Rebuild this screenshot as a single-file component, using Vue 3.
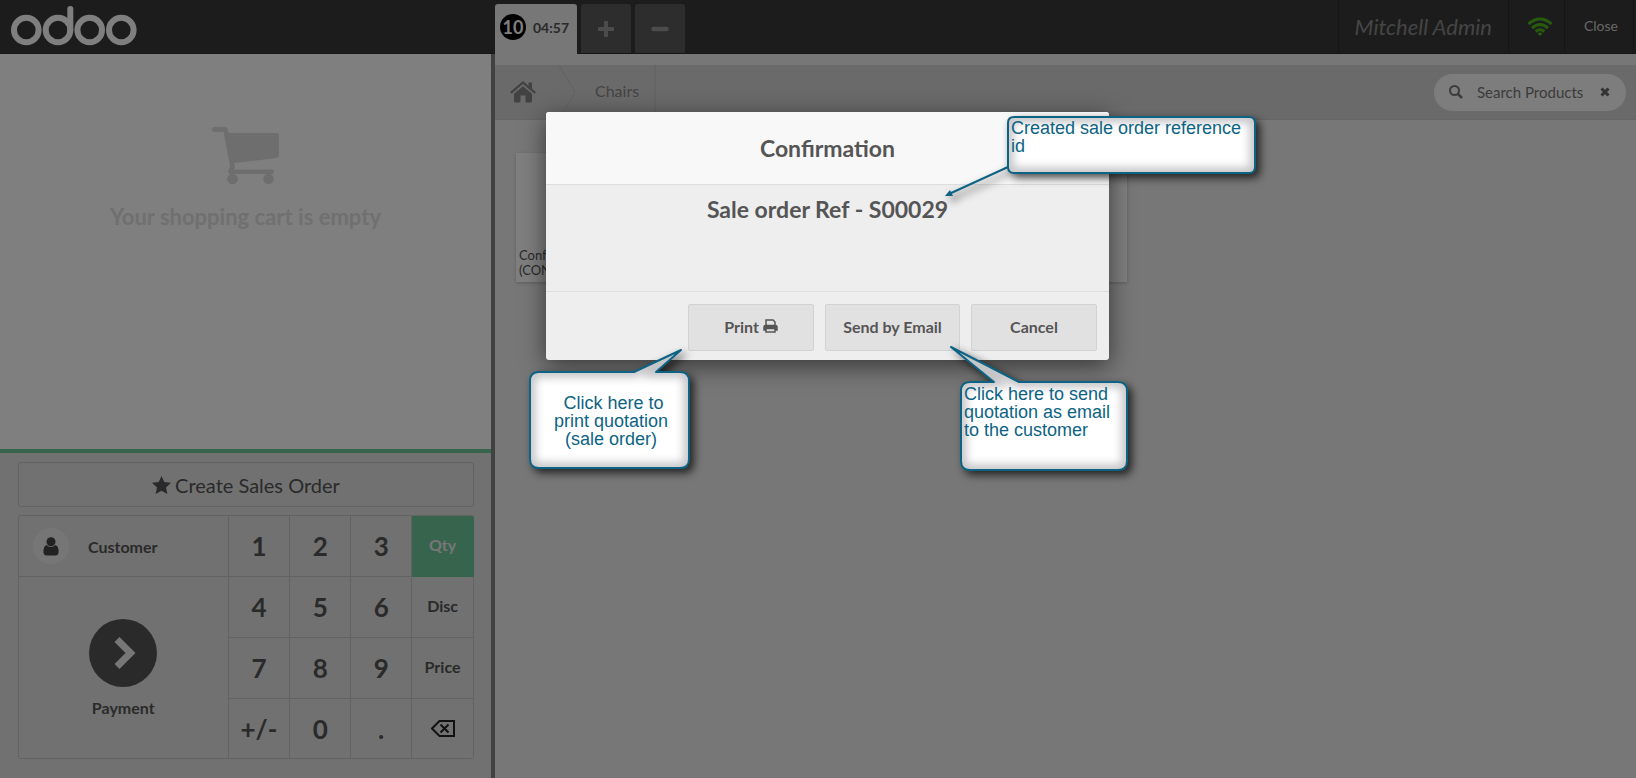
<script setup>
import { ref } from 'vue'

const search = ref('')
const mode = ref('Qty')
const cards = ['Conference Chair (CONFIG)', '', '', '']
const keys = ['1', '2', '3', 'Qty', '4', '5', '6', 'Disc', '7', '8', '9', 'Price', '+/-', '0', '.', 'back']
const modes = ['Qty', 'Disc', 'Price']

function press(key) {
  if (modes.includes(key)) mode.value = key
}

const bubbles = [
  {
    id: 'print',
    path: 'M-9 260 H88 L135 238 L110 260 H134 Q143 260 143 269 V347 Q143 356 134 356 H-7 Q-16 356 -16 347 V269 Q-16 260 -7 260 Z'
  },
  {
    id: 'email',
    path: 'M424 270 H448 L405 235 L473 270 H572 Q581 270 581 279 V349 Q581 358 572 358 H424 Q415 358 415 349 V279 Q415 270 424 270 Z'
  },
  {
    id: 'reference',
    path: 'M468 5 H703 Q709 5 709 11 V55 Q709 61 703 61 H468 Q462 61 462 55 V11 Q462 5 468 5 Z'
  }
]
</script>

<template>
  <div class="pos">
    <header class="topbar">
      <div class="brand">
        <svg width="128" height="44" viewBox="0 0 128 44" role="img" aria-label="odoo">
          <g fill="none" stroke="#fff" stroke-width="6" stroke-linecap="round">
            <circle cx="16.300" cy="26" r="12.3" />
            <circle cx="48" cy="26" r="12.3" />
            <circle cx="79.700" cy="26" r="12.3" />
            <circle cx="111.300" cy="26" r="12.3" />
            <path d="M60.300 5 V26" />
          </g>
        </svg>
      </div>
      <nav class="tabs">
        <button class="tab active" type="button"><span class="seq">10</span><span class="time">04:57</span></button>
        <button class="tab" type="button" aria-label="New order">
          <svg width="16" height="16" viewBox="0 0 16 16"><path d="M8 1.5V14.5M1.5 8H14.5" stroke="#999" stroke-width="4" stroke-linecap="round" /></svg>
        </button>
        <button class="tab" type="button" aria-label="Remove order">
          <svg width="18" height="16" viewBox="0 0 18 16"><path d="M2.5 8H15.5" stroke="#999" stroke-width="4.5" stroke-linecap="round" /></svg>
        </button>
      </nav>
      <div class="status">
        <span class="user">Mitchell Admin</span>
        <span class="wifi">
          <svg width="26" height="20" viewBox="0 0 26 20" fill="none" stroke="#4eb81e" stroke-width="3">
            <path d="M1.5 7 Q13 -3 24.5 7" /><path d="M5 11 Q13 4 21 11" /><path d="M8.700 14.500 Q13 11 17.300 14.500" />
            <path d="M10.500 16.500 L13 19 L15.500 16.500 Q13 14.500 10.500 16.500Z" fill="#4eb81e" stroke="none" />
          </svg>
        </span>
        <button class="close" type="button">Close</button>
      </div>
    </header>

    <div class="content">
      <section class="left">
        <div class="order">
          <svg width="68" height="58" viewBox="0 0 68 58" fill="#dcdcdc">
            <path d="M2.500 0H13Q15.500 0 16 3L16.500 6H65Q67 6 67 8V28Q67 30.500 64.500 31L22 36L23 40.500Q23 42 22 42.500H59.500Q62 42.500 62 45Q62 47 59.500 47H18.500Q16 47 16 44.500L18 39L11.500 5H2.500Q0 5 0 2.500Q0 0 2.500 0Z" />
            <circle cx="20.500" cy="52" r="5.300" /><circle cx="56.500" cy="52" r="5.300" />
          </svg>
          <h1>Your shopping cart is empty</h1>
        </div>
        <div class="actions">
          <button class="create" type="button">
            <svg width="19" height="18" viewBox="0 0 19 18"><path d="M9.500 0L12.300 6L19 6.800L14 11.400L15.400 18L9.500 14.700L3.600 18L5 11.400L0 6.800L6.700 6Z" fill="#555" /></svg>
            Create Sales Order
          </button>
          <div class="pad">
            <button class="customer" type="button">
              <span class="avatar"><svg width="16" height="19" viewBox="0 0 16 19" fill="#444"><circle cx="8" cy="4.700" r="4.500" /><path d="M3.500 8Q8 12 12.500 8Q16 9 15.500 16Q15 18.500 12.500 18.500H3.500Q1 18.500 .5 16Q0 9 3.500 8Z" /></svg></span>
              Customer
            </button>
            <button class="payment" type="button">
              <span class="go"><svg width="22" height="34" viewBox="0 0 22 34"><path d="M3 3.500L16.500 17L3 30.500" fill="none" stroke="#eee" stroke-width="7" /></svg></span>
              Payment
            </button>
            <button
              v-for="key in keys"
              :key="key"
              type="button"
              :class="['key', { word: modes.includes(key), selected: key === mode }]"
              @click="press(key)"
            >
              <svg v-if="key === 'back'" width="24" height="17" viewBox="0 0 24 17" fill="none" stroke="#222" stroke-width="2" role="img" aria-label="Backspace">
                <path d="M8.500 1H23V16H8.500L1 8.500Z" /><path d="M9.500 4.500L17.500 12.500M17.500 4.500L9.500 12.500" />
              </svg>
              <template v-else>{{ key }}</template>
            </button>
          </div>
        </div>
      </section>

      <main class="right">
        <div class="crumbs">
          <a class="home" href="#" aria-label="Home">
            <svg width="26" height="22" viewBox="0 0 26 22" fill="#858585">
              <path d="M13 0L18.500 4.700V1.500H22V7.700L26 11L24.500 12.700L13 3L1.500 12.700L0 11Z" /><path d="M13 5.200L22 12.700V20Q22 21.500 20.500 21.500H15.500V14.500H10.500V21.500H5.500Q4 21.500 4 20V12.700Z" />
            </svg>
          </a>
          <svg class="chevron" width="20" height="55" viewBox="0 0 20 55"><path d="M1 0L17 27L1 55" fill="none" stroke="#cacaca" stroke-width="1.500" /></svg>
          <a class="crumb" href="#">Chairs</a>
          <label class="search">
            <svg width="14" height="14" viewBox="0 0 14 14" fill="none" stroke="#777" stroke-width="2"><circle cx="5.500" cy="5.500" r="4.500" /><path d="M9 9L13 13" stroke-width="2.500" /></svg>
            <input v-model="search" type="text" placeholder="Search Products" aria-label="Search Products" />
            <button type="button" aria-label="Clear search" @click="search = ''">
              <svg width="10" height="10" viewBox="0 0 10 10"><path d="M1.500 1.500L8.500 8.500M8.500 1.500L1.500 8.500" stroke="#666" stroke-width="3" /></svg>
            </button>
          </label>
        </div>
        <div class="products">
          <article v-for="(name, i) in cards" :key="i" class="card">{{ name }}</article>
        </div>
      </main>
    </div>

    <div class="backdrop">
      <div class="stage">
        <div class="dialog" role="dialog" aria-labelledby="dialog-title">
          <h2 id="dialog-title">Confirmation</h2>
          <p class="message">Sale order Ref - S00029</p>
          <footer>
            <button type="button">
              Print
              <svg width="15" height="14" viewBox="0 0 15 14" fill="none" stroke="#555" stroke-width="1.500"><path d="M3 6V1H10L12 3V6" /><path d="M1 11V8Q1 6.500 2.500 6.500H12.500Q14 6.500 14 8V11H12V9H3V11Z" fill="#555" /><path d="M3 9.500H12V13H3Z" fill="#e2e1e2" /></svg>
            </button>
            <button class="wide" type="button">Send by Email</button>
            <button type="button">Cancel</button>
          </footer>
        </div>

        <svg class="bubbles" width="562" height="248" viewBox="0 0 562 248" aria-hidden="true">
          <defs>
            <filter id="soft" x="-20%" y="-20%" width="140%" height="140%"><feGaussianBlur stdDeviation="4" /></filter>
            <clipPath v-for="b in bubbles" :id="'clip-' + b.id" :key="b.id"><path :d="b.path" /></clipPath>
          </defs>
          <g class="lift"><path d="M462 55L403 82" stroke="#0d6384" stroke-width="2" /><path d="M399 84L404 78L407 84Z" fill="#0d6384" /></g>
          <g v-for="b in bubbles" :key="b.id" class="lift">
            <path :d="b.path" fill="#fff" />
            <g :clip-path="`url(#clip-${b.id})`">
              <path :d="b.path" fill="none" stroke="#c4c4c8" stroke-width="11" filter="url(#soft)" />
            </g>
            <path :d="b.path" fill="none" stroke="#0d6384" stroke-width="2" stroke-linejoin="round" />
          </g>
        </svg>
        <p class="note note-print">&nbsp;Click here to<br />print quotation<br />(sale order)</p>
        <p class="note note-email">Click here to send<br />quotation as email<br />to the customer</p>
        <p class="note note-reference">Created sale order reference<br />id</p>
      </div>
    </div>
  </div>
</template>

<style>
body {
  margin: 0;
  overflow: hidden;
}
</style>

<style scoped>
* {
  box-sizing: border-box;
}
.pos {
  position: relative;
  display: flex;
  flex-direction: column;
  height: 100vh;
  font-family: Lato, "Liberation Sans", sans-serif;
  font-size: 16px;
  color: #555;
}
button {
  font: inherit;
  color: inherit;
  background: none;
  border: 0;
  padding: 0;
  margin: 0;
}
svg {
  display: block;
  flex: none;
}
.topbar {
  display: flex;
  height: 54px;
  background: #393939;
  border-bottom: 1px solid #2c2c2c;
}
.brand {
  flex: 0 0 495px;
  padding: 4px 10px;
}
.tabs {
  display: flex;
  gap: 4px;
  padding-top: 4px;
}
.tab {
  display: flex;
  align-items: center;
  justify-content: center;
  width: 50px;
  height: 49px;
  background: #5a5a5a;
  border-radius: 3px 3px 0 0;
}
.tab.active {
  width: 82px;
  height: 50px;
  gap: 7px;
  padding: 0 3px 4px 0;
  background: #eee;
  font-weight: 700;
  font-size: 14px;
}
.seq {
  width: 26px;
  height: 26px;
  border-radius: 50%;
  background: #000;
  color: #fff;
  font-size: 18px;
  line-height: 26px;
}
.status {
  display: flex;
  margin-left: auto;
  align-items: stretch;
  padding-right: 2px;
}
.status > * {
  display: flex;
  align-items: center;
  border-left: 1px solid #2a2a2a;
}
.user {
  padding: 2px 16px;
  font-size: 22px;
  font-style: italic;
  color: #8a8a8a;
}
.wifi {
  padding: 0 11px 0 18px;
}
.close {
  padding: 0 15px 2px 19px;
  font-size: 14px;
  color: #ccc;
  border-right: 1px solid #2a2a2a;
}
.content {
  display: flex;
  flex: 1;
  min-height: 0;
}
.left {
  display: flex;
  flex-direction: column;
  flex: 0 0 495px;
  border-right: 4px solid #828282;
  background: #e2e2e2;
}
.order {
  flex: 1;
  display: flex;
  flex-direction: column;
  align-items: center;
  padding-top: 73px;
  background: #fff;
}
.order h1 {
  margin: 18px 0 0;
  font-size: 22px;
  line-height: 28px;
  color: #e0e0e0;
}
.actions {
  padding: 9px 17px 19px 18px;
  border-top: 4px solid #6ec89b;
}
.create {
  display: flex;
  align-items: center;
  justify-content: center;
  gap: 4px;
  width: 100%;
  height: 45px;
  margin-bottom: 8px;
  border: 1px solid #c4c4c4;
  border-radius: 3px;
  font-size: 20px;
}
.pad {
  display: grid;
  grid-template-columns: 210fr 62fr 61fr 61fr 62fr;
  grid-template-rows: 61px 61px 61px 60px;
  border: solid #c4c4c4;
  border-width: 1px 0 0 1px;
  border-radius: 3px;
  overflow: hidden;
}
.pad button {
  border: solid #c4c4c4;
  border-width: 0 1px 1px 0;
  font-weight: 700;
}
.pad .key {
  display: flex;
  align-items: center;
  justify-content: center;
  font-size: 26px;
}
.pad .word {
  padding-bottom: 3px;
  font-size: 16px;
}
.pad .selected {
  background: #6ec89b;
  border-color: #6ec89b;
  color: #eee;
}
.pad .customer {
  grid-area: 1 / 1;
  display: flex;
  align-items: center;
  gap: 19px;
  padding-left: 14px;
}
.avatar {
  display: flex;
  align-items: center;
  justify-content: center;
  width: 36px;
  height: 36px;
  border-radius: 50%;
  background: #ececec;
}
.payment {
  grid-area: 2 / 1 / 5 / 2;
  display: flex;
  flex-direction: column;
  align-items: center;
  justify-content: center;
  gap: 11px;
}
.go {
  display: flex;
  align-items: center;
  justify-content: center;
  width: 68px;
  height: 68px;
  padding-left: 4px;
  border-radius: 50%;
  background: #555;
}
.right {
  flex: 1;
  min-width: 0;
  padding-top: 11px;
  background: #eee;
}
.crumbs {
  display: flex;
  align-items: center;
  height: 55px;
  padding-right: 10px;
  background: #d5d5d5;
  border-bottom: 1px solid #ccc;
}
.home {
  padding: 0 22px 0 15px;
}
.crumb {
  display: flex;
  align-items: center;
  height: 100%;
  padding: 0 15px 3px 17px;
  border-right: 2px solid #cacaca;
  color: #888;
  text-decoration: none;
}
.search {
  display: flex;
  align-items: center;
  gap: 14px;
  width: 192px;
  height: 37px;
  margin-left: auto;
  padding: 0 16px 0 15px;
  border-radius: 19px;
  background: #fbfbfb;
}
.search input {
  flex: 1;
  min-width: 0;
  padding: 0;
  border: 0;
  outline: 0;
  background: none;
  font: 15px Lato, sans-serif;
}
.search input::placeholder {
  color: #777;
  opacity: 1;
}
.products {
  display: flex;
  gap: 21px;
  padding: 33px 21px;
}
.card {
  display: flex;
  align-items: flex-end;
  width: 137px;
  height: 129px;
  padding: 0 3px 4px;
  background: #fff;
  box-shadow: 0 1px 3px #bbb;
  font-size: 13px;
  line-height: 15px;
}
.backdrop {
  position: absolute;
  inset: 0;
  display: flex;
  justify-content: center;
  align-items: flex-start;
  padding: 112px 0 0 19px;
  background: rgba(0, 0, 0, 0.5);
}
.stage {
  position: relative;
  width: 563px;
}
.dialog {
  border-radius: 3px;
  background: #efeeef;
  box-shadow: 0 6px 24px rgba(0, 0, 0, 0.55);
  text-align: center;
  font-weight: 700;
  overflow: hidden;
}
.dialog h2 {
  margin: 0;
  padding: 21px 0;
  border-bottom: 1px solid #ddd;
  background: #f8f8f8;
  font-size: 23px;
  line-height: 30px;
}
.message {
  height: 106px;
  margin: 0;
  padding-top: 9px;
  font-size: 23px;
  line-height: 30px;
}
.dialog footer {
  display: flex;
  justify-content: flex-end;
  gap: 11px;
  padding: 12px 12px 9px;
  border-top: 1px solid #ddd;
}
.dialog footer button {
  display: flex;
  align-items: center;
  justify-content: center;
  gap: 4px;
  width: 126px;
  height: 47px;
  padding-bottom: 3px;
  border: 1px solid #d2d2d2;
  border-radius: 2px;
  background: #e2e1e2;
}
.dialog footer .wide {
  width: 135px;
}
.bubbles {
  position: absolute;
  top: 0;
  left: 0;
  overflow: visible;
}
.lift {
  filter: drop-shadow(4px 4px 4px rgba(0, 0, 0, 0.7));
}
.note {
  position: absolute;
  margin: 0;
  font: 18px/18px "Liberation Sans", Arial, sans-serif;
  color: #0d6384;
  white-space: nowrap;
}
.note-print {
  top: 282px;
  left: -15px;
  width: 160px;
  text-align: center;
}
.note-email {
  top: 273px;
  left: 418px;
}
.note-reference {
  top: 7px;
  left: 465px;
}
</style>
